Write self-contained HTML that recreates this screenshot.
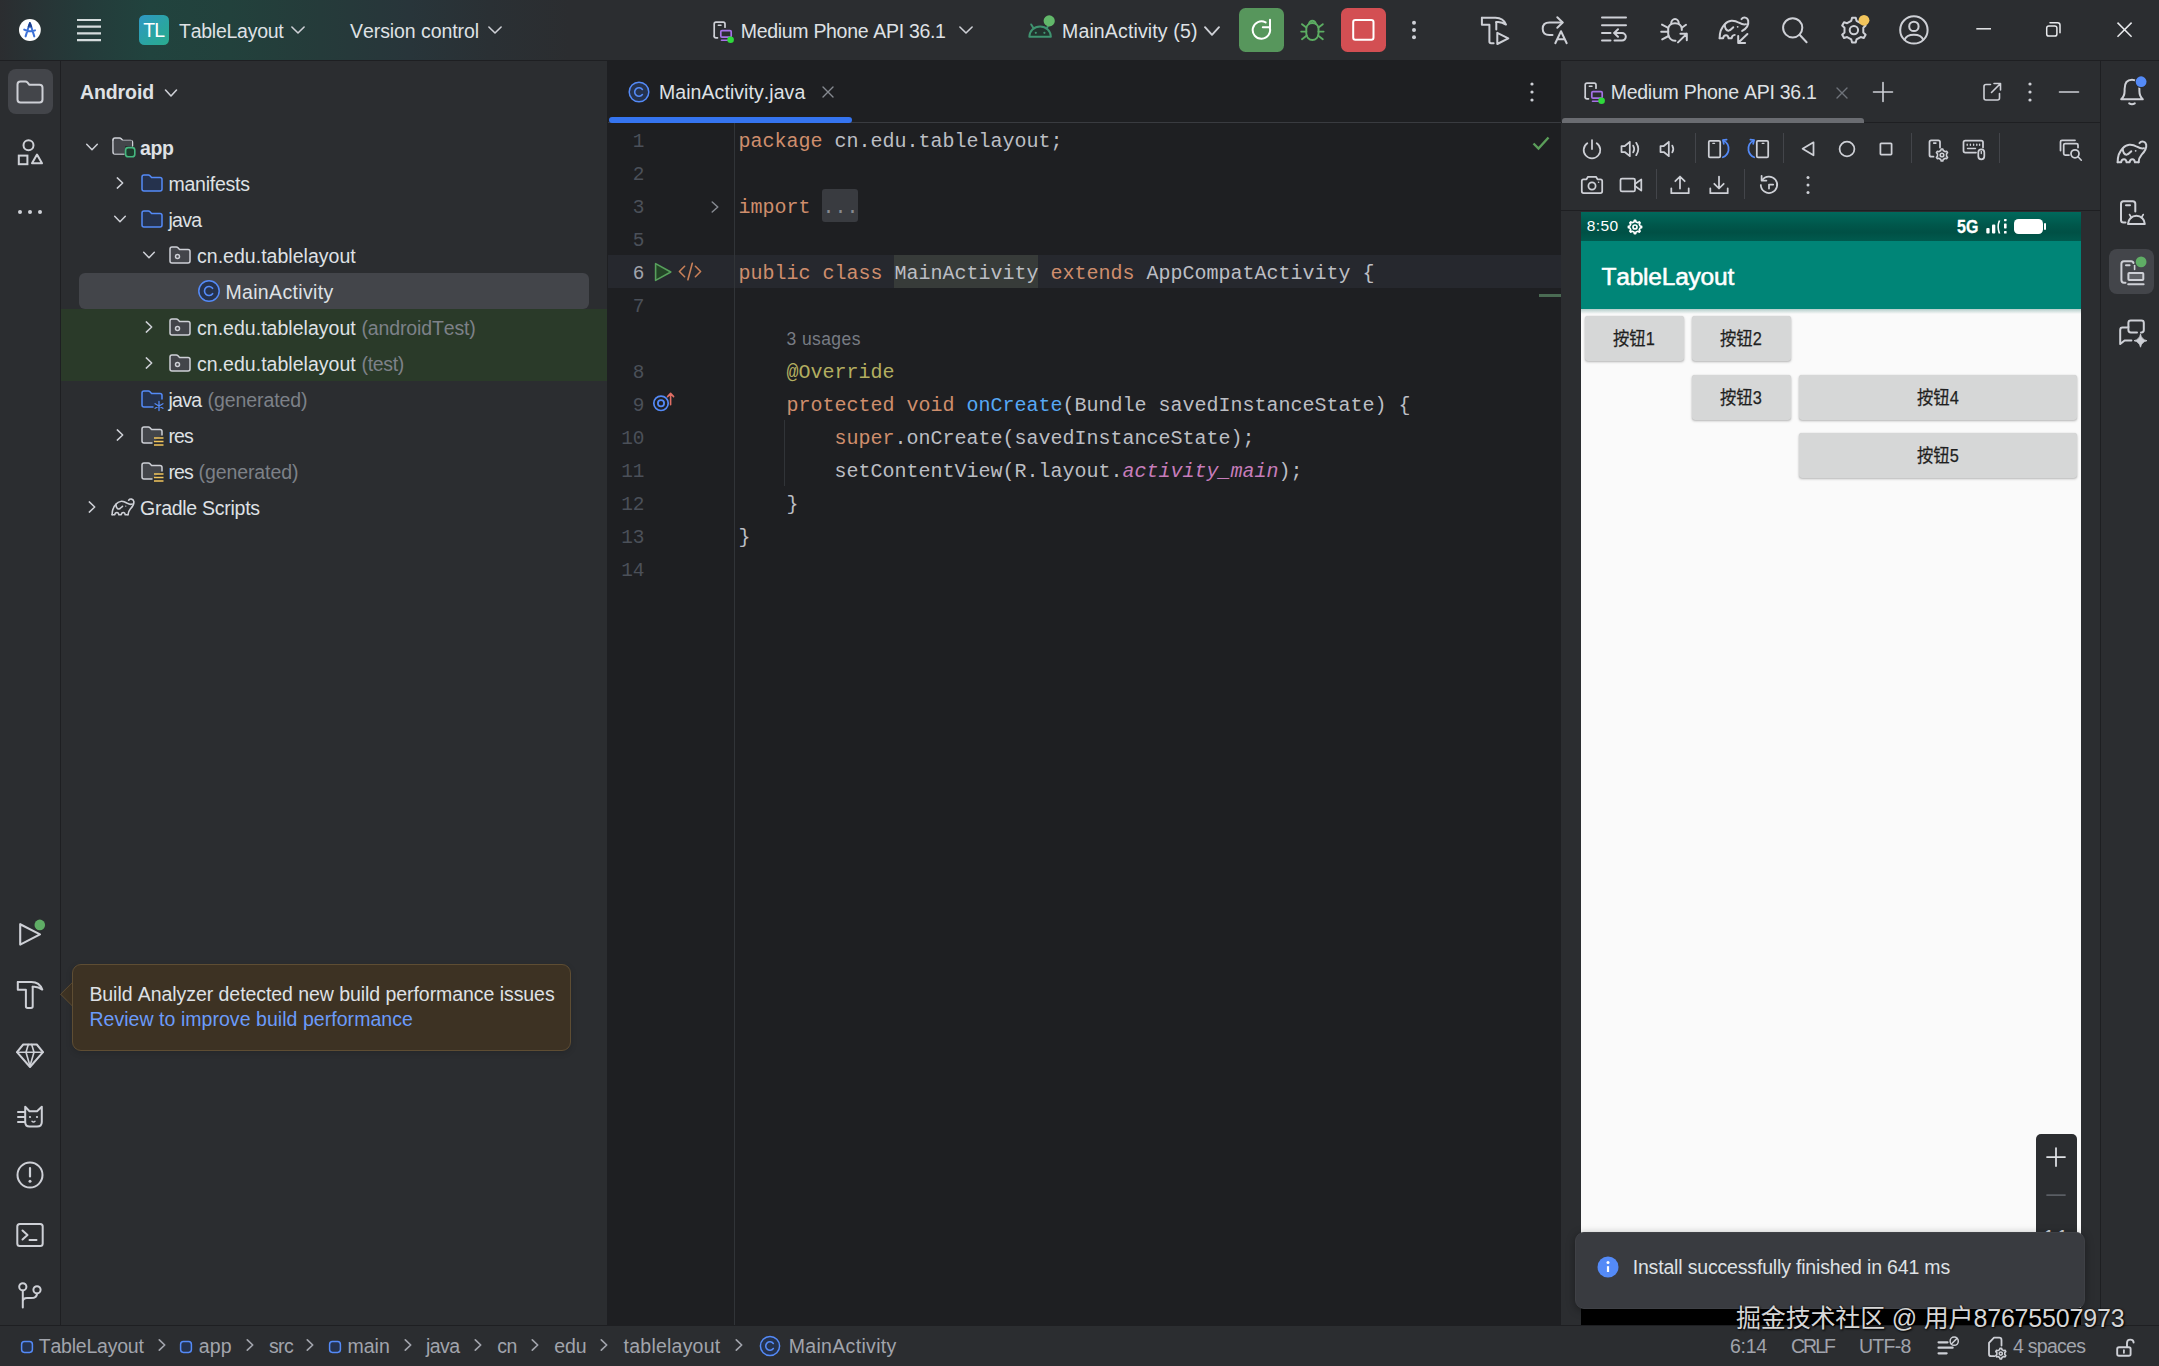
<!DOCTYPE html>
<html lang="en"><head><meta charset="utf-8"><title>TableLayout – MainActivity.java</title>
<style>
*{margin:0;padding:0;box-sizing:border-box}
html,body{width:2159px;height:1366px;overflow:hidden;background:#2b2d30}
body{position:relative;font-family:"Liberation Sans","Noto Sans CJK SC",sans-serif;font-kerning:none;-webkit-font-smoothing:antialiased}
.b{position:absolute}
.t{position:absolute;white-space:pre;display:block}
.s{font-family:"Liberation Sans","Noto Sans CJK SC",sans-serif}
.m{font-family:"Liberation Mono","Noto Sans CJK SC",monospace}
.i{position:absolute;overflow:visible;fill:none;stroke:#ced0d6;stroke-width:1.6;stroke-linecap:round;stroke-linejoin:round}
</style></head>
<body>
<div class="b" style="left:0px;top:0px;width:2159px;height:60px;background:linear-gradient(90deg,#2b2d30 0px,#283335 35px,#243b3a 85px,#21433e 150px,#22413c 230px,#253b3a 320px,#28353a 410px,#2a3034 490px,#2b2d30 570px);"></div>
<div class="b" style="left:0px;top:60px;width:2159px;height:1px;background:#1e1f22;"></div>
<div class="b" style="left:60px;top:61px;width:1px;height:1264px;background:#1e1f22;"></div>
<div class="b" style="left:607px;top:61px;width:1px;height:1264px;background:#1e1f22;"></div>
<div class="b" style="left:608px;top:61px;width:952.5px;height:1264px;background:#1e1f22;"></div>
<div class="b" style="left:1560.5px;top:61px;width:539.5px;height:1264px;background:#2b2d30;"></div>
<div class="b" style="left:2100px;top:61px;width:1px;height:1264px;background:#1e1f22;"></div>
<div class="b" style="left:0px;top:1325px;width:2159px;height:1px;background:#1e1f22;"></div>
<svg class="i" style="left:15px;top:15px;" width="30" height="30" viewBox="15 15 30 30"><circle cx="29.9" cy="30" r="10.9" fill="#fff" stroke="none"/>
<g stroke="#3d72d8" stroke-width="2" fill="none"><path d="M25.6 36.4L29.5 24M34.3 36.4L30.4 24M24.2 29.6Q29.9 32.6 35 30.4"/></g><path d="M28.3 26.6L29.9 22 31.5 26.6Z" fill="#1d3f8a" stroke="#1d3f8a" stroke-width="1"/></svg>
<svg class="i" style="left:73.5px;top:15.0px;" width="30" height="30" viewBox="0 0 30 30"><path d="M3 5H27M3 11.6H27M3 18.4H27M3 25.1H27" stroke-width="2.2" stroke="#d5dcdd" stroke-linecap="butt"/></svg>
<div class="b" style="left:139px;top:15px;width:30px;height:30px;background:linear-gradient(135deg,#2f97c6 0%,#2aa5a0 60%,#2aab8e 100%);border-radius:5.5px"></div>
<span class="t s" style="left:143.2px;top:18.1px;font-size:19.5px;line-height:25px;color:#fff;letter-spacing:-0.728px;">TL</span>
<span class="t s" style="left:179.0px;top:18.9px;font-size:19.5px;line-height:25px;color:#dfe1e5;letter-spacing:-0.257px;">TableLayout</span>
<svg class="i" style="left:286.0px;top:18.4px;" width="24" height="24" viewBox="0 0 24 24"><path d="M5.9 9L12 15L18.1 9" stroke="#ced0d6" stroke-width="1.6"/></svg>
<span class="t s" style="left:350.0px;top:18.9px;font-size:19.5px;line-height:25px;color:#dfe1e5;letter-spacing:-0.071px;">Version control</span>
<svg class="i" style="left:483.0px;top:18.4px;" width="24" height="24" viewBox="0 0 24 24"><path d="M5.9 9L12 15L18.1 9" stroke="#ced0d6" stroke-width="1.6"/></svg>
<svg class="i" style="left:709.0px;top:17.0px" width="28" height="28" viewBox="709 17 28 28"><g transform="translate(0 0)"><g transform="translate(0 0)"><path d="M714.2 36V24Q714.2 22.2 716 22.2H723.2Q725 22.2 725 24V27.2" stroke="#ced0d6" stroke-width="1.7"/><path d="M714.2 36Q714.2 37.8 716 37.8H717.5" stroke="#ced0d6" stroke-width="1.7"/><path d="M718.3 25.3H721" stroke="#ced0d6" stroke-width="1.5"/>
<rect x="720.8" y="30.6" width="10.4" height="6.6" rx="1.2" stroke="#a571e6" stroke-width="1.7" fill="#2b2d30"/><path d="M721.5 40.2H728" stroke="#a571e6" stroke-width="1.6"/>
<circle cx="730.6" cy="39.8" r="3.3" fill="#2fd93c" stroke="none"/></g></g></svg>
<span class="t s" style="left:740.8px;top:18.9px;font-size:19.5px;line-height:25px;color:#dfe1e5;letter-spacing:-0.313px;">Medium Phone API 36.1</span>
<svg class="i" style="left:954.0px;top:18.4px;" width="24" height="24" viewBox="0 0 24 24"><path d="M5.9 9L12 15L18.1 9" stroke="#ced0d6" stroke-width="1.6"/></svg>
<svg class="i" style="left:1024px;top:12px;" width="34" height="30" viewBox="1024 12 34 30"><path d="M1029.3 36.8a10.8 10.3 0 0 1 21.6 0z" stroke="#3f9470" stroke-width="1.9" fill="#22332e"/><path d="M1033.4 28L1031.2 24.4M1046.8 28l2.2-3.6" stroke="#3f9470" stroke-width="1.9"/>
<circle cx="1035.8" cy="32.8" r="1.1" fill="#3f9470" stroke="none"/><circle cx="1044.4" cy="32.8" r="1.1" fill="#3f9470" stroke="none"/>
<circle cx="1049.2" cy="20.9" r="5.6" fill="#62b86a" stroke="none"/></svg>
<span class="t s" style="left:1062.0px;top:18.9px;font-size:19.5px;line-height:25px;color:#dfe1e5;letter-spacing:0.145px;">MainActivity (5)</span>
<svg class="i" style="left:1199.7px;top:19.0px;" width="24" height="24" viewBox="0 0 24 24"><path d="M5 8.2L12 15.8L19 8.2" stroke="#ced0d6" stroke-width="1.9"/></svg>
<div class="b" style="left:1239px;top:7.6px;width:45px;height:44.6px;background:#57965c;border-radius:6.5px"></div>
<svg class="i" style="left:1246px;top:15px;" width="30" height="30" viewBox="1246 15 30 30"><path d="M1269.7 27.4A8.7 8.7 0 1 1 1265.6 22.4" stroke="#fff" stroke-width="2"/><path d="M1262.8 27.2H1270V19.8" stroke="#fff" stroke-width="2"/></svg>
<svg class="i" style="left:1297px;top:15px;" width="32" height="30" viewBox="1297 15 32 30"><g stroke="#5cad62" stroke-width="1.9"><path d="M1306.3 28.5a6.1 5.5 0 0 1 12.2 0V33.5a6.1 6.6 0 0 1-12.2 0z"/><path d="M1309 23.6A3.6 4.3 0 0 1 1315.8 23.6"/><path d="M1306.3 27.5L1302 24.2M1318.5 27.5l4.3-3.3M1306.3 31.6H1301.2M1318.5 31.6h5.1M1306.8 35.6L1302 39.2M1318 35.6l4.8 3.6"/></g></svg>
<div class="b" style="left:1341px;top:7.6px;width:45px;height:44.6px;background:#d34f53;border-radius:6.5px"></div>
<svg class="i" style="left:1348px;top:15px;" width="30" height="30" viewBox="1348 15 30 30"><rect x="1353.2" y="19.9" width="20.3" height="19.9" rx="2.2" stroke="#fff" stroke-width="2"/></svg>
<svg class="i" style="left:1402.4px;top:14.0px;" width="24" height="32" viewBox="0 0 24 32"><g fill="#ced0d6" stroke="none"><circle cx="12" cy="8.8" r="2"/><circle cx="12" cy="16" r="2"/><circle cx="12" cy="23.2" r="2"/></g></svg>
<svg class="i" style="left:1478px;top:13px;" width="34" height="34" viewBox="1478 13 34 34"><g stroke-width="2"><path d="M1481.9 17.7H1495.5Q1503.3 17.7 1506 24.6Q1501.5 21.3 1496.3 22"/><path d="M1481.9 17.7V24.8H1489.4V41.6Q1489.4 43.3 1491.1 43.3H1493.6"/><path d="M1496.3 22.3V29.5"/><path d="M1497.3 32.8V44L1508.3 38.4Z"/></g></svg>
<svg class="i" style="left:1538px;top:13px;" width="34" height="34" viewBox="1538 13 34 34"><g stroke-width="2"><path d="M1562.4 22.5H1549.5Q1542.7 22.5 1542.7 28.8T1549.5 35H1552.5"/><path d="M1557.3 17.3L1562.7 22.5 1557.3 27.7"/><path d="M1555.3 43.2L1561 31.2 1566.7 43.2M1557.3 39.2H1564.7"/></g></svg>
<svg class="i" style="left:1598px;top:13px;" width="34" height="34" viewBox="1598 13 34 34"><g stroke-width="2"><path d="M1602 17.6H1626M1602 25.3H1626M1602 33H1610.5M1602 40.6H1610.5M1614.5 40.6H1622A3.8 3.8 0 0 0 1622 33H1614.5"/><path d="M1618 29.3L1614.2 33 1618 36.7"/></g></svg>
<svg class="i" style="left:1658px;top:13px;" width="34" height="34" viewBox="1658 13 34 34"><g stroke-width="2"><path d="M1681.8 30V28.8A6.8 5.6 0 0 0 1668.2 28.8V33.8A6.9 7 0 0 0 1675.5 40.8"/><path d="M1671.2 23.6A3.8 4.6 0 0 1 1678.8 23.6"/><path d="M1668.2 27.8L1662 24.6M1681.8 27.8L1686 24.8M1668.2 31.8H1661.2M1668.6 36L1662.2 39.4"/><path d="M1678 42.4L1686.8 33.8M1680.4 33.8H1686.8V40.2"/></g></svg>
<svg class="i" style="left:1711.7px;top:7.6px" width="44" height="40" viewBox="1711.7 7.6 44 40"><g stroke="#ced0d6" stroke-width="2.0"><path d="M1719.35 37.85C1719.35 30.82 1721.99 26.14 1724.62 23.79C1727.84 19.69 1733.41 19.11 1738.68 22.33C1741.31 23.79 1743.66 24.67 1745.71 23.79"/><path d="M1724.33 24.09C1724.62 27.89 1726.09 30.53 1728.43 30.24C1730.48 29.65 1731.94 27.89 1732.97 26.87"/><path d="M1741.17 18.67C1743.07 16.18 1747.17 16.77 1747.90 20.28C1748.63 24.96 1745.71 28.48 1741.90 30.53"/><path d="M1719.35 37.85H1722.87Q1723.16 34.77 1725.79 34.77Q1727.84 34.77 1728.28 37.85H1731.36Q1731.65 34.77 1734.43 34.48"/><circle cx="1737.36" cy="26.43" r="0.90" fill="#ced0d6" stroke="none"/><path d="M1747.1 33.6L1738 42.4M1737.9 35.6V42.5H1744.8"/></g></svg>
<svg class="i" style="left:1779px;top:13px;" width="32" height="34" viewBox="1779 13 32 34"><g stroke-width="2"><circle cx="1792.7" cy="27.8" r="9.6"/><path d="M1799.6 34.8L1806.6 42.2"/></g></svg>
<svg class="i" style="left:1838px;top:14px" width="34" height="34" viewBox="1838 14 34 34"><path d="M1851.29 20.76L1852.06 17.64L1855.74 17.64L1856.51 20.76L1860.69 23.17L1863.77 22.27L1865.62 25.46L1863.30 27.69L1863.30 32.51L1865.62 34.74L1863.77 37.93L1860.69 37.03L1856.51 39.44L1855.74 42.56L1852.06 42.56L1851.29 39.44L1847.11 37.03L1844.03 37.93L1842.18 34.74L1844.50 32.51L1844.50 27.69L1842.18 25.46L1844.03 22.27L1847.11 23.17Z" stroke="#ced0d6" stroke-width="2" stroke-linejoin="round" fill="none"/><circle cx="1853.9" cy="30.1" r="4.20" stroke="#ced0d6" stroke-width="2" fill="none"/><circle cx="1864" cy="20.3" r="5.4" fill="#f2c55c" stroke="none"/></svg>
<svg class="i" style="left:1897px;top:13px;" width="34" height="34" viewBox="1897 13 34 34"><g stroke-width="2"><circle cx="1913.9" cy="29.9" r="13.7"/><circle cx="1913.9" cy="26.4" r="4.7"/><path d="M1904.6 39.8Q1906.4 34.8 1913.9 34.8T1923.2 39.8"/></g></svg>
<svg class="i" style="left:1970px;top:20px;" width="28" height="20" viewBox="1970 20 28 20"><path d="M1976.3 28.8H1991" stroke-width="1.5" stroke-linecap="butt" stroke="#e8e9ec"/></svg>
<svg class="i" style="left:2040px;top:16px;" width="28" height="28" viewBox="2040 16 28 28"><rect x="2046.7" y="25.9" width="10.2" height="10.2" rx="2.2" stroke="#e8e9ec" stroke-width="1.5"/><path d="M2050 22.8H2057.5Q2060 22.8 2060 25.3V32.8" stroke="#e8e9ec" stroke-width="1.5"/></svg>
<svg class="i" style="left:2110px;top:16px;" width="28" height="28" viewBox="2110 16 28 28"><path d="M2117.5 22.6L2131.6 36.7M2131.6 22.6L2117.5 36.7" stroke-width="1.5" stroke="#e8e9ec" stroke-linecap="butt"/></svg>
<span class="t s" style="left:80.0px;top:79.9px;font-size:19.5px;line-height:25px;color:#dfe1e5;letter-spacing:-0.105px;font-weight:700;">Android</span>
<svg class="i" style="left:159.0px;top:81.0px;" width="24" height="24" viewBox="0 0 24 24"><path d="M6.5 9L12 15L17.5 9" stroke="#ced0d6" stroke-width="1.6"/></svg>
<div class="b" style="left:61px;top:309px;width:546px;height:72px;background:#2a3a29;"></div>
<div class="b" style="left:79px;top:273px;width:510px;height:35.5px;background:#43454a;border-radius:6px"></div>
<svg class="i" style="left:79.6px;top:135.2px;" width="24" height="24" viewBox="0 0 24 24"><path d="M6.7 9.2L12 14.8L17.3 9.2" stroke="#ced0d6" stroke-width="1.5"/></svg>
<svg class="i" style="left:109.5px;top:132.7px;" width="28" height="28" viewBox="0 0 28 28"><path d="M3 7Q3 5 5 5H9.5Q10.5 5 11.2 5.8L12.8 7.6H20.5Q22.5 7.6 22.5 9.6V13" stroke="#ced0d6" fill="#43454a" stroke-width="1.5"/><path d="M3 7V19Q3 21 5 21H14" stroke="#ced0d6" stroke-width="1.5"/><path d="M3.8 7.6H22V13H15V20.5H4Z" fill="#43454a" stroke="none"/>
<rect x="15.6" y="14.6" width="9.2" height="9.2" rx="2.6" stroke="#45b87f" fill="#1d3a2c" stroke-width="1.6"/></svg>
<span class="t s" style="left:140.0px;top:135.9px;font-size:19.5px;line-height:25px;color:#dfe1e5;letter-spacing:-0.323px;font-weight:700;">app</span>
<svg class="i" style="left:107.5px;top:170.7px;" width="24" height="24" viewBox="0 0 24 24"><path d="M9.3 6.9L14.7 12L9.3 17.1" stroke="#ced0d6" stroke-width="1.5"/></svg>
<svg class="i" style="left:140.0px;top:170.7px;" width="24" height="24" viewBox="0 0 24 24"><path d="M2 6Q2 4 4 4H8.3Q9.3 4 10 4.8L11.6 6.6H20Q22 6.6 22 8.6V18Q22 20 20 20H4Q2 20 2 18Z" stroke="#548af7" fill="#25324d" stroke-width="1.5"/></svg>
<span class="t s" style="left:168.5px;top:171.9px;font-size:19.5px;line-height:25px;color:#dfe1e5;letter-spacing:-0.250px;">manifests</span>
<svg class="i" style="left:107.5px;top:207.2px;" width="24" height="24" viewBox="0 0 24 24"><path d="M6.7 9.2L12 14.8L17.3 9.2" stroke="#ced0d6" stroke-width="1.5"/></svg>
<svg class="i" style="left:140.0px;top:206.7px;" width="24" height="24" viewBox="0 0 24 24"><path d="M2 6Q2 4 4 4H8.3Q9.3 4 10 4.8L11.6 6.6H20Q22 6.6 22 8.6V18Q22 20 20 20H4Q2 20 2 18Z" stroke="#548af7" fill="#25324d" stroke-width="1.5"/></svg>
<span class="t s" style="left:168.5px;top:207.9px;font-size:19.5px;line-height:25px;color:#dfe1e5;letter-spacing:-0.718px;">java</span>
<svg class="i" style="left:137.0px;top:243.2px;" width="24" height="24" viewBox="0 0 24 24"><path d="M6.7 9.2L12 14.8L17.3 9.2" stroke="#ced0d6" stroke-width="1.5"/></svg>
<svg class="i" style="left:168.0px;top:242.7px;" width="24" height="24" viewBox="0 0 24 24"><path d="M2 6Q2 4 4 4H8.3Q9.3 4 10 4.8L11.6 6.6H20Q22 6.6 22 8.6V18Q22 20 20 20H4Q2 20 2 18Z" stroke="#ced0d6" fill="#43454a" stroke-width="1.5"/><circle cx="9.5" cy="13.5" r="2" stroke="#ced0d6" fill="none" stroke-width="1.5"/></svg>
<span class="t s" style="left:197.0px;top:243.9px;font-size:19.5px;line-height:25px;color:#dfe1e5;letter-spacing:0.029px;">cn.edu.tablelayout</span>
<svg class="i" style="left:196.7px;top:278.7px;" width="24" height="24" viewBox="0 0 24 24"><circle cx="12" cy="12" r="10.2" stroke="#548af7" fill="#25324d" stroke-width="1.5"/><path d="M15.6 9.3A4.5 4.5 0 1 0 15.6 14.7" stroke="#548af7" stroke-width="1.6" fill="none"/></svg>
<span class="t s" style="left:225.4px;top:279.9px;font-size:19.5px;line-height:25px;color:#dfe1e5;letter-spacing:0.348px;">MainActivity</span>
<svg class="i" style="left:136.8px;top:314.7px;" width="24" height="24" viewBox="0 0 24 24"><path d="M9.3 6.9L14.7 12L9.3 17.1" stroke="#ced0d6" stroke-width="1.5"/></svg>
<svg class="i" style="left:168.0px;top:314.7px;" width="24" height="24" viewBox="0 0 24 24"><path d="M2 6Q2 4 4 4H8.3Q9.3 4 10 4.8L11.6 6.6H20Q22 6.6 22 8.6V18Q22 20 20 20H4Q2 20 2 18Z" stroke="#ced0d6" fill="#43454a" stroke-width="1.5"/><circle cx="9.5" cy="13.5" r="2" stroke="#ced0d6" fill="none" stroke-width="1.5"/></svg>
<span class="t s" style="left:197.0px;top:315.9px;font-size:19.5px;line-height:25px;color:#dfe1e5;letter-spacing:0.029px;">cn.edu.tablelayout</span>
<span class="t s" style="left:361.5px;top:315.9px;font-size:19.5px;line-height:25px;color:#7d8188;letter-spacing:-0.136px;">(androidTest)</span>
<svg class="i" style="left:136.8px;top:350.7px;" width="24" height="24" viewBox="0 0 24 24"><path d="M9.3 6.9L14.7 12L9.3 17.1" stroke="#ced0d6" stroke-width="1.5"/></svg>
<svg class="i" style="left:168.0px;top:350.7px;" width="24" height="24" viewBox="0 0 24 24"><path d="M2 6Q2 4 4 4H8.3Q9.3 4 10 4.8L11.6 6.6H20Q22 6.6 22 8.6V18Q22 20 20 20H4Q2 20 2 18Z" stroke="#ced0d6" fill="#43454a" stroke-width="1.5"/><circle cx="9.5" cy="13.5" r="2" stroke="#ced0d6" fill="none" stroke-width="1.5"/></svg>
<span class="t s" style="left:197.0px;top:351.9px;font-size:19.5px;line-height:25px;color:#dfe1e5;letter-spacing:0.029px;">cn.edu.tablelayout</span>
<span class="t s" style="left:361.5px;top:351.9px;font-size:19.5px;line-height:25px;color:#7d8188;letter-spacing:-0.320px;">(test)</span>
<svg class="i" style="left:140.0px;top:386.7px;" width="24" height="24" viewBox="0 0 24 24"><path d="M22 12V8.6Q22 6.6 20 6.6H11.6L10 4.8Q9.3 4 8.3 4H4Q2 4 2 6V18Q2 20 4 20H13" stroke="#548af7" fill="#25324d" stroke-width="1.5"/><path d="M19 14.5V23.5M15.1 16.7L22.9 21.3M15.1 21.3L22.9 16.7" stroke="#548af7" stroke-width="1.3"/></svg>
<span class="t s" style="left:168.5px;top:387.9px;font-size:19.5px;line-height:25px;color:#dfe1e5;letter-spacing:-0.718px;">java</span>
<span class="t s" style="left:207.5px;top:387.9px;font-size:19.5px;line-height:25px;color:#7d8188;letter-spacing:-0.074px;">(generated)</span>
<svg class="i" style="left:107.5px;top:422.7px;" width="24" height="24" viewBox="0 0 24 24"><path d="M9.3 6.9L14.7 12L9.3 17.1" stroke="#ced0d6" stroke-width="1.5"/></svg>
<svg class="i" style="left:140.0px;top:422.7px;" width="24" height="24" viewBox="0 0 24 24"><path d="M22 12V8.6Q22 6.6 20 6.6H11.6L10 4.8Q9.3 4 8.3 4H4Q2 4 2 6V18Q2 20 4 20H12" stroke="#ced0d6" fill="#43454a" stroke-width="1.5"/><path d="M14 15H23.5M14 18.5H23.5M14 22H23.5" stroke="#f2c55c" stroke-width="1.7" stroke-linecap="butt"/></svg>
<span class="t s" style="left:168.5px;top:423.9px;font-size:19.5px;line-height:25px;color:#dfe1e5;letter-spacing:-0.930px;">res</span>
<svg class="i" style="left:140.0px;top:458.7px;" width="24" height="24" viewBox="0 0 24 24"><path d="M22 12V8.6Q22 6.6 20 6.6H11.6L10 4.8Q9.3 4 8.3 4H4Q2 4 2 6V18Q2 20 4 20H12" stroke="#ced0d6" fill="#43454a" stroke-width="1.5"/><path d="M14 15H23.5M14 18.5H23.5M14 22H23.5" stroke="#f2c55c" stroke-width="1.7" stroke-linecap="butt"/></svg>
<span class="t s" style="left:168.5px;top:459.9px;font-size:19.5px;line-height:25px;color:#dfe1e5;letter-spacing:-0.930px;">res</span>
<span class="t s" style="left:198.5px;top:459.9px;font-size:19.5px;line-height:25px;color:#7d8188;letter-spacing:-0.092px;">(generated)</span>
<svg class="i" style="left:79.6px;top:494.7px;" width="24" height="24" viewBox="0 0 24 24"><path d="M9.3 6.9L14.7 12L9.3 17.1" stroke="#ced0d6" stroke-width="1.5"/></svg>
<svg class="i" style="left:101.0px;top:487.3px" width="44" height="40" viewBox="101.0 487.3 44 40"><g stroke="#ced0d6" stroke-width="1.6"><path d="M112.10 515.09C112.10 509.75 114.10 506.19 116.10 504.41C118.55 501.29 122.78 500.85 126.78 503.29C128.79 504.41 130.57 505.07 132.12 504.41"/><path d="M115.88 504.63C116.10 507.52 117.21 509.53 118.99 509.30C120.55 508.86 121.66 507.52 122.44 506.74"/><path d="M128.67 500.51C130.12 498.62 133.24 499.07 133.79 501.74C134.35 505.30 132.12 507.52 130.34 509.30C128.79 511.08 128.12 512.86 128.01 515.09"/><path d="M112.10 515.09H114.77Q114.99 512.75 116.99 512.75Q118.55 512.75 118.88 515.09H121.22Q121.44 512.75 123.33 512.75Q124.89 512.75 125.23 515.09H128.01"/><circle cx="125.78" cy="506.41" r="0.68" fill="#ced0d6" stroke="none"/></g></svg>
<span class="t s" style="left:140.0px;top:495.9px;font-size:19.5px;line-height:25px;color:#dfe1e5;letter-spacing:-0.267px;">Gradle Scripts</span>
<div class="b" style="left:608px;top:122px;width:952.5px;height:1px;background:#393b40;"></div>
<div class="b" style="left:609px;top:117px;width:243px;height:5.5px;background:#3574f0;border-radius:3px"></div>
<svg class="i" style="left:626.5px;top:80.0px;" width="24" height="24" viewBox="0 0 24 24"><circle cx="12" cy="12" r="9.8" stroke="#548af7" fill="#25324d" stroke-width="1.5"/><path d="M15.4 9.4A4.3 4.3 0 1 0 15.4 14.6" stroke="#548af7" stroke-width="1.6" fill="none"/></svg>
<span class="t s" style="left:659.0px;top:79.5px;font-size:19.5px;line-height:25px;color:#dfe1e5;letter-spacing:0.064px;">MainActivity.java</span>
<svg class="i" style="left:820.0px;top:84.0px;" width="16" height="16" viewBox="0 0 16 16"><path d="M3 3L13 13M13 3L3 13" stroke="#868a91" stroke-width="1.4"/></svg>
<svg class="i" style="left:1520.0px;top:76.0px;" width="24" height="32" viewBox="0 0 24 32"><g fill="#ced0d6" stroke="none"><circle cx="12" cy="8" r="1.6"/><circle cx="12" cy="16" r="1.6"/><circle cx="12" cy="24" r="1.6"/></g></svg>
<div class="b" style="left:608px;top:254.5px;width:952.5px;height:33.0px;background:#26282e;"></div>
<div class="b" style="left:734px;top:123px;width:1px;height:1202px;background:#313438;"></div>
<div class="b" style="left:894px;top:254.5px;width:144px;height:33.0px;background:#373b39;"></div>
<div class="b" style="left:822px;top:189px;width:36px;height:33px;background:#393b40;border-radius:3px"></div>
<div class="b" style="left:784px;top:420px;width:1px;height:66px;background:#313438;"></div>
<span class="t m" style="left:632.8px;top:130.0px;font-size:19.4px;line-height:25px;color:#4b5059;letter-spacing:-0.122px;">1</span>
<span class="t m" style="left:632.8px;top:163.0px;font-size:19.4px;line-height:25px;color:#4b5059;letter-spacing:-0.122px;">2</span>
<span class="t m" style="left:632.8px;top:196.0px;font-size:19.4px;line-height:25px;color:#4b5059;letter-spacing:-0.122px;">3</span>
<span class="t m" style="left:632.8px;top:229.0px;font-size:19.4px;line-height:25px;color:#4b5059;letter-spacing:-0.122px;">5</span>
<span class="t m" style="left:632.8px;top:262.0px;font-size:19.4px;line-height:25px;color:#a1a3ab;letter-spacing:-0.122px;">6</span>
<span class="t m" style="left:632.8px;top:295.0px;font-size:19.4px;line-height:25px;color:#4b5059;letter-spacing:-0.122px;">7</span>
<span class="t m" style="left:632.8px;top:361.0px;font-size:19.4px;line-height:25px;color:#4b5059;letter-spacing:-0.122px;">8</span>
<span class="t m" style="left:632.8px;top:394.0px;font-size:19.4px;line-height:25px;color:#4b5059;letter-spacing:-0.122px;">9</span>
<span class="t m" style="left:621.3px;top:427.0px;font-size:19.4px;line-height:25px;color:#4b5059;letter-spacing:-0.122px;">10</span>
<span class="t m" style="left:621.3px;top:460.0px;font-size:19.4px;line-height:25px;color:#4b5059;letter-spacing:-0.122px;">11</span>
<span class="t m" style="left:621.3px;top:493.0px;font-size:19.4px;line-height:25px;color:#4b5059;letter-spacing:-0.122px;">12</span>
<span class="t m" style="left:621.3px;top:526.0px;font-size:19.4px;line-height:25px;color:#4b5059;letter-spacing:-0.122px;">13</span>
<span class="t m" style="left:621.3px;top:559.0px;font-size:19.4px;line-height:25px;color:#4b5059;letter-spacing:-0.122px;">14</span>
<span class="t m" style="left:738.4px;top:128.7px;font-size:20px;line-height:26px;color:#cf8e6d;">package</span>
<span class="t m" style="left:834.4px;top:128.7px;font-size:20px;line-height:26px;color:#bcbec4;">cn.edu.tablelayout;</span>
<span class="t m" style="left:738.4px;top:194.7px;font-size:20px;line-height:26px;color:#cf8e6d;">import</span>
<span class="t m" style="left:822.4px;top:194.7px;font-size:20px;line-height:26px;color:#868a91;">...</span>
<span class="t m" style="left:738.4px;top:260.7px;font-size:20px;line-height:26px;color:#cf8e6d;">public</span>
<span class="t m" style="left:822.4px;top:260.7px;font-size:20px;line-height:26px;color:#cf8e6d;">class</span>
<span class="t m" style="left:894.4px;top:260.7px;font-size:20px;line-height:26px;color:#bcbec4;">MainActivity</span>
<span class="t m" style="left:1050.4px;top:260.7px;font-size:20px;line-height:26px;color:#cf8e6d;">extends</span>
<span class="t m" style="left:1146.4px;top:260.7px;font-size:20px;line-height:26px;color:#bcbec4;">AppCompatActivity {</span>
<span class="t s" style="left:786.5px;top:328.0px;font-size:17.5px;line-height:23px;color:#787c84;letter-spacing:0.409px;">3 usages</span>
<span class="t m" style="left:786.4px;top:359.7px;font-size:20px;line-height:26px;color:#b3ae60;">@Override</span>
<span class="t m" style="left:786.4px;top:392.7px;font-size:20px;line-height:26px;color:#cf8e6d;">protected</span>
<span class="t m" style="left:906.4px;top:392.7px;font-size:20px;line-height:26px;color:#cf8e6d;">void</span>
<span class="t m" style="left:966.4px;top:392.7px;font-size:20px;line-height:26px;color:#56a8f5;">onCreate</span>
<span class="t m" style="left:1062.4px;top:392.7px;font-size:20px;line-height:26px;color:#bcbec4;">(Bundle savedInstanceState) {</span>
<span class="t m" style="left:834.4px;top:425.7px;font-size:20px;line-height:26px;color:#cf8e6d;">super</span>
<span class="t m" style="left:894.4px;top:425.7px;font-size:20px;line-height:26px;color:#bcbec4;">.onCreate(savedInstanceState);</span>
<span class="t m" style="left:834.4px;top:458.7px;font-size:20px;line-height:26px;color:#bcbec4;">setContentView(R.layout.</span>
<span class="t m" style="left:1122.4px;top:458.7px;font-size:20px;line-height:26px;color:#c77dbb;font-style:italic;">activity_main</span>
<span class="t m" style="left:1278.4px;top:458.7px;font-size:20px;line-height:26px;color:#bcbec4;">);</span>
<span class="t m" style="left:786.4px;top:491.7px;font-size:20px;line-height:26px;color:#bcbec4;">}</span>
<span class="t m" style="left:738.4px;top:524.7px;font-size:20px;line-height:26px;color:#bcbec4;">}</span>
<svg class="i" style="left:651.0px;top:259.5px;" width="24" height="24" viewBox="0 0 24 24"><path d="M4.6 3.6V20.4L19.8 12Z" stroke="#57a05c" fill="#234426" stroke-width="1.6"/></svg>
<svg class="i" style="left:676px;top:260px;" width="28" height="24" viewBox="676 260 28 24"><path d="M684.6 266.3L679.4 271.5 684.6 276.7M695.4 266.3L700.6 271.5 695.4 276.7M692.3 263.2L687.9 279.8" stroke="#c98058" stroke-width="1.6"/></svg>
<svg class="i" style="left:650px;top:390px;" width="28" height="26" viewBox="650 390 28 26"><circle cx="661" cy="403.3" r="7.2" stroke="#548af7" stroke-width="1.7"/><circle cx="661" cy="403.3" r="3.1" stroke="#548af7" stroke-width="1.8"/><path d="M670.6 404.8V393.6M667.6 396.6L670.6 393.4 673.6 396.6" stroke="#e06e64" stroke-width="1.6"/></svg>
<svg class="i" style="left:702.5px;top:194.5px;" width="24" height="24" viewBox="0 0 24 24"><path d="M9.2 7L14.8 12L9.2 17" stroke="#868a91" stroke-width="1.5"/></svg>
<svg class="i" style="left:1528.5px;top:131.0px;" width="24" height="24" viewBox="0 0 24 24"><path d="M4.5 12.5L9.5 17.5 19.5 6.5" stroke="#5b9e5a" stroke-width="2.4" stroke-linecap="butt" stroke-linejoin="miter"/></svg>
<div class="b" style="left:1539px;top:294px;width:21.5px;height:2.5px;background:#4a6b53;"></div>
<svg class="i" style="left:1580.0px;top:78.2px" width="28" height="28" viewBox="709 17 28 28"><g transform="translate(-871 -61.2)"><g transform="translate(871 61.2)"><path d="M714.2 36V24Q714.2 22.2 716 22.2H723.2Q725 22.2 725 24V27.2" stroke="#ced0d6" stroke-width="1.7"/><path d="M714.2 36Q714.2 37.8 716 37.8H717.5" stroke="#ced0d6" stroke-width="1.7"/><path d="M718.3 25.3H721" stroke="#ced0d6" stroke-width="1.5"/>
<rect x="720.8" y="30.6" width="10.4" height="6.6" rx="1.2" stroke="#a571e6" stroke-width="1.7" fill="#2b2d30"/><path d="M721.5 40.2H728" stroke="#a571e6" stroke-width="1.6"/>
<circle cx="730.6" cy="39.8" r="3.3" fill="#2fd93c" stroke="none"/></g></g></svg>
<span class="t s" style="left:1610.7px;top:79.5px;font-size:19.5px;line-height:25px;color:#dfe1e5;letter-spacing:-0.256px;">Medium Phone API 36.1</span>
<svg class="i" style="left:1834.0px;top:84.5px;" width="16" height="16" viewBox="0 0 16 16"><path d="M3 3L13 13M13 3L3 13" stroke="#6f737a" stroke-width="1.4"/></svg>
<svg class="i" style="left:1871.0px;top:80.0px;" width="24" height="24" viewBox="0 0 24 24"><path d="M12 2.5V21.5M2.5 12H21.5" stroke-width="1.6"/></svg>
<svg class="i" style="left:1979.5px;top:80.0px;" width="24" height="24" viewBox="0 0 24 24"><path d="M10.5 4.5H6Q4 4.5 4 6.5V18Q4 20 6 20H17.5Q19.5 20 19.5 18V13.5" stroke-width="1.6"/><path d="M14 3.5H20.5V10M20.5 3.5L11.5 12.5" stroke-width="1.6"/></svg>
<svg class="i" style="left:2018.0px;top:76.0px;" width="24" height="32" viewBox="0 0 24 32"><g fill="#ced0d6" stroke="none"><circle cx="12" cy="8" r="1.6"/><circle cx="12" cy="16" r="1.6"/><circle cx="12" cy="24" r="1.6"/></g></svg>
<svg class="i" style="left:2057.0px;top:80.0px;" width="24" height="24" viewBox="0 0 24 24"><path d="M2.5 12H21.5" stroke-width="1.6"/></svg>
<div class="b" style="left:1561px;top:121.5px;width:539px;height:1.0px;background:#1e1f22;"></div>
<div class="b" style="left:1562px;top:118px;width:302px;height:4.5px;background:#6a6c71;border-radius:3px 3px 0 0"></div>
<svg class="i" style="left:1580.0px;top:137.2px;" width="24" height="24" viewBox="0 0 24 24"><path d="M7.3 6.2A8.3 8.3 0 1 0 16.7 6.2M12 3V12" stroke-width="1.75"/></svg>
<svg class="i" style="left:1618.5px;top:137.2px;" width="24" height="24" viewBox="0 0 24 24"><path d="M2.5 9H5.8L10.8 4.8V19.2L5.8 15H2.5Z" stroke-width="1.75"/><path d="M14.2 8.6Q16.2 12 14.2 15.4M17.2 5.8Q21.4 12 17.2 18.2" stroke-width="1.75"/></svg>
<svg class="i" style="left:1655.5px;top:137.2px;" width="24" height="24" viewBox="0 0 24 24"><path d="M4.5 9H7.8L12.8 4.8V19.2L7.8 15H4.5Z" stroke-width="1.75"/><path d="M16.3 8.6Q18.3 12 16.3 15.4" stroke-width="1.75"/></svg>
<div class="b" style="left:1694.5px;top:133px;width:1.0px;height:30px;background:#43454a;"></div>
<svg class="i" style="left:1706.0px;top:137.2px;" width="26" height="24" viewBox="0 0 26 24"><rect x="2.8" y="3.8" width="11.4" height="16.6" rx="1.2" stroke-width="1.75"/><path d="M6.8 6.3H8.6" stroke-width="1.3"/><path d="M17.3 3.5Q23.5 6.5 22.5 13.5 21.5 18.5 16.8 20.3" stroke="#548af7" stroke-width="1.75"/><path d="M17.8 6.8L17 3.2 20.6 2.6" stroke="#548af7" stroke-width="1.75"/></svg>
<svg class="i" style="left:1745.0px;top:137.2px;" width="26" height="24" viewBox="0 0 26 24"><rect x="11.8" y="3.8" width="11.4" height="16.6" rx="1.2" stroke-width="1.75"/><path d="M17.2 6.3H19" stroke-width="1.3"/><path d="M8.7 3.5Q2.5 6.5 3.5 13.5 4.5 18.5 9.2 20.3" stroke="#548af7" stroke-width="1.75"/><path d="M8.2 6.8L9 3.2 5.4 2.6" stroke="#548af7" stroke-width="1.75"/></svg>
<div class="b" style="left:1782.5px;top:133px;width:1.0px;height:30px;background:#43454a;"></div>
<svg class="i" style="left:1796.0px;top:137.2px;" width="24" height="24" viewBox="0 0 24 24"><path d="M17.5 5.3V18.3L6.6 11.8Z" stroke-width="1.75"/></svg>
<svg class="i" style="left:1834.8px;top:137.2px;" width="24" height="24" viewBox="0 0 24 24"><circle cx="12" cy="12" r="7.4" stroke-width="1.75"/></svg>
<svg class="i" style="left:1873.7px;top:137.2px;" width="24" height="24" viewBox="0 0 24 24"><rect x="6.4" y="6.3" width="11.2" height="11.2" rx="0.8" stroke-width="1.75"/></svg>
<div class="b" style="left:1910.5px;top:133px;width:1.0px;height:30px;background:#43454a;"></div>
<svg class="i" style="left:1925.0px;top:136.7px;" width="26" height="26" viewBox="0 0 26 26"><path d="M4.5 18V5Q4.5 3.3 6.2 3.3H13.3Q15 3.3 15 5V10.5M4.5 18Q4.5 19.7 6.2 19.7H8.5M8.8 6H10.8" stroke-width="1.75"/></svg><svg class="i" style="left:1926.0px;top:139.3px" width="32" height="32" viewBox="1926 139.3 32 32"><path d="M1940.79 150.78L1941.19 149.36L1942.81 149.36L1943.21 150.78L1945.31 151.99L1946.74 151.62L1947.56 153.03L1946.52 154.09L1946.52 156.51L1947.56 157.57L1946.74 158.98L1945.31 158.61L1943.21 159.82L1942.81 161.24L1941.19 161.24L1940.79 159.82L1938.69 158.61L1937.26 158.98L1936.44 157.57L1937.48 156.51L1937.48 154.09L1936.44 153.03L1937.26 151.62L1938.69 151.99Z" stroke="#ced0d6" stroke-width="1.6" stroke-linejoin="round" fill="none"/><circle cx="1942" cy="155.3" r="1.80" stroke="#ced0d6" stroke-width="1.6" fill="none"/></svg>
<svg class="i" style="left:1961.0px;top:136.7px;" width="26" height="26" viewBox="0 0 26 26"><path d="M15 15.5H4.3Q2.5 15.5 2.5 13.7V5.3Q2.5 3.5 4.3 3.5H20.2Q22 3.5 22 5.3V10.5" stroke-width="1.75"/><path d="M6.2 7.3V8.3M9.4 7.3V8.3M12.6 7.3V8.3M15.8 7.3V8.3M18.6 7.3V8.3M6.5 11.5H14.5" stroke-width="1.4"/><rect x="17.3" y="12.3" width="6" height="10" rx="3" stroke-width="1.75"/><path d="M20.3 14.5V16.5" stroke-width="1.3"/></svg>
<div class="b" style="left:1998.5px;top:133px;width:1.0px;height:30px;background:#43454a;"></div>
<svg class="i" style="left:2057.0px;top:137.2px;" width="26" height="26" viewBox="0 0 26 26"><path d="M3.5 13.5V4.8Q3.5 3.3 5 3.3H18" stroke-width="1.75"/><path d="M12 18H8.2Q6.7 18 6.7 16.5V8Q6.7 6.5 8.2 6.5H19.5Q21 6.5 21 8V10.5" stroke-width="1.75"/><circle cx="18" cy="16.8" r="4" stroke-width="1.75"/><path d="M21 19.8L24.3 23.2" stroke-width="1.6"/></svg>
<svg class="i" style="left:1580.0px;top:173.2px;" width="24" height="24" viewBox="0 0 24 24"><path d="M1.8 8Q1.8 6.3 3.5 6.3H6.5L8 3.8H16L17.5 6.3H20.5Q22.2 6.3 22.2 8V18.3Q22.2 20 20.5 20H3.5Q1.8 20 1.8 18.3Z" stroke-width="1.75"/><circle cx="12" cy="13" r="3.6" stroke-width="1.75"/><circle cx="18.6" cy="9.3" r="0.8" fill="#ced0d6" stroke="none"/></svg>
<svg class="i" style="left:1619.0px;top:173.2px;" width="24" height="24" viewBox="0 0 24 24"><rect x="1.5" y="5.6" width="14.5" height="12.8" rx="1.5" stroke-width="1.75"/><path d="M16 11L22.3 6.4V17.6L16 13" stroke-width="1.75"/></svg>
<div class="b" style="left:1655.5px;top:169px;width:1.0px;height:30px;background:#43454a;"></div>
<svg class="i" style="left:1668.0px;top:173.2px;" width="24" height="24" viewBox="0 0 24 24"><path d="M12 15.5V4M7.3 8.2L12 3.5 16.7 8.2M3.3 15.3V20.2H20.7V15.3" stroke-width="1.75"/></svg>
<svg class="i" style="left:1707.0px;top:173.2px;" width="24" height="24" viewBox="0 0 24 24"><path d="M12 3.5V15M7.3 10.8L12 15.5 16.7 10.8M3.3 15.3V20.2H20.7V15.3" stroke-width="1.75"/></svg>
<div class="b" style="left:1743.5px;top:169px;width:1.0px;height:30px;background:#43454a;"></div>
<svg class="i" style="left:1757.0px;top:173.2px;" width="24" height="24" viewBox="0 0 24 24"><path d="M5.2 7.2A8.2 8.2 0 1 1 3.8 12" stroke-width="1.75"/><path d="M4.6 2.8V7.6H9.4M12 15.5V11.5H16.2" stroke-width="1.75"/></svg>
<svg class="i" style="left:1796.2px;top:169.2px;" width="24" height="32" viewBox="0 0 24 32"><g fill="#ced0d6" stroke="none"><circle cx="12" cy="8.5" r="1.5"/><circle cx="12" cy="16" r="1.5"/><circle cx="12" cy="23.5" r="1.5"/></g></svg>
<div class="b" style="left:1561px;top:210px;width:539px;height:1px;background:#1e1f22;"></div>
<div class="b" style="left:1581px;top:212px;width:500.1999999999998px;height:1113px;background:#000;"></div>
<div class="b" style="left:1581px;top:212px;width:500.1999999999998px;height:29px;background:linear-gradient(#00695c 0%,#00574b 45%,#005045 70%,#005a4e 100%);"></div>
<div class="b" style="left:1581px;top:241px;width:500.1999999999998px;height:68px;background:#008577;"></div>
<div class="b" style="left:1581px;top:309px;width:500.1999999999998px;height:1000px;background:#fafafa;"></div>
<div class="b" style="left:1581px;top:309px;width:500.1999999999998px;height:5px;background:linear-gradient(rgba(0,90,80,.28),rgba(0,0,0,0));"></div>
<span class="t s" style="left:1586.7px;top:216.2px;font-size:15.5px;line-height:20px;color:#fff;letter-spacing:0.433px;">8:50</span>
<svg class="i" style="left:1619.0px;top:210.5px" width="32" height="32" viewBox="1619 210.5 32 32"><path d="M1634.00 221.45L1634.33 219.93L1635.67 219.93L1636.00 221.45L1637.86 222.22L1639.17 221.38L1640.12 222.33L1639.28 223.64L1640.05 225.50L1641.57 225.83L1641.57 227.17L1640.05 227.50L1639.28 229.36L1640.12 230.67L1639.17 231.62L1637.86 230.78L1636.00 231.55L1635.67 233.07L1634.33 233.07L1634.00 231.55L1632.14 230.78L1630.83 231.62L1629.88 230.67L1630.72 229.36L1629.95 227.50L1628.43 227.17L1628.43 225.83L1629.95 225.50L1630.72 223.64L1629.88 222.33L1630.83 221.38L1632.14 222.22Z" stroke="#fff" stroke-width="1.7" stroke-linejoin="round" fill="none"/><circle cx="1635" cy="226.5" r="2.00" stroke="#fff" stroke-width="1.7" fill="none"/></svg>
<span class="t s" style="left:1957.0px;top:214.3px;font-size:19px;line-height:25px;color:#fff;font-weight:700;-webkit-text-stroke:0.3px #fff;transform:scaleX(0.8404);transform-origin:0 50%;">5G</span>
<svg class="i" style="left:1984.5px;top:217.0px;" width="24" height="18" viewBox="0 0 24 18"><g fill="#fff" stroke="none"><rect x="1.3" y="11" width="3.3" height="5.6" rx="1"/><rect x="7" y="7.5" width="3.3" height="9.1" rx="1"/><path d="M15.3 3.6Q12.6 9.5 15.3 16.6H13.6Q11.2 9.5 13.6 3.6Z"/><rect x="19" y="2" width="2.6" height="2.2" rx=".6"/><rect x="19" y="6.4" width="2.6" height="5" rx=".6"/><rect x="19" y="14" width="2.6" height="2.6" rx=".6"/></g></svg>
<div class="b" style="left:2014.3px;top:218.7px;width:28.700000000000045px;height:15.0px;background:#fff;border-radius:4.5px"></div>
<div class="b" style="left:2044px;top:222.5px;width:2.2000000000000455px;height:7.5px;background:#fff;border-radius:1px"></div>
<span class="t s" style="left:1601.5px;top:260.8px;font-size:24.5px;line-height:32px;color:#fff;letter-spacing:-0.213px;-webkit-text-stroke:0.55px #fff;">TableLayout</span>
<div class="b" style="left:1585px;top:316px;width:98.5px;height:45px;background:#d6d7d7;border-radius:3px;box-shadow:0 1px 2.5px rgba(0,0,0,.28),0 0 1px rgba(0,0,0,.15)"></div>
<span class="t s" style="left:1613.3px;top:326.7px;font-size:18.2px;line-height:24px;color:#1f1f1f;-webkit-text-stroke:0.25px #1f1f1f;transform:scaleX(0.8985);transform-origin:0 50%;">按钮1</span>
<div class="b" style="left:1692px;top:316px;width:98.59999999999991px;height:45px;background:#d6d7d7;border-radius:3px;box-shadow:0 1px 2.5px rgba(0,0,0,.28),0 0 1px rgba(0,0,0,.15)"></div>
<span class="t s" style="left:1720.4px;top:326.7px;font-size:18.2px;line-height:24px;color:#1f1f1f;-webkit-text-stroke:0.25px #1f1f1f;transform:scaleX(0.8985);transform-origin:0 50%;">按钮2</span>
<div class="b" style="left:1692px;top:374.6px;width:98.59999999999991px;height:45.39999999999998px;background:#d6d7d7;border-radius:3px;box-shadow:0 1px 2.5px rgba(0,0,0,.28),0 0 1px rgba(0,0,0,.15)"></div>
<span class="t s" style="left:1720.4px;top:385.5px;font-size:18.2px;line-height:24px;color:#1f1f1f;-webkit-text-stroke:0.25px #1f1f1f;transform:scaleX(0.8985);transform-origin:0 50%;">按钮3</span>
<div class="b" style="left:1798.7px;top:374.6px;width:278.29999999999995px;height:45.39999999999998px;background:#d6d7d7;border-radius:3px;box-shadow:0 1px 2.5px rgba(0,0,0,.28),0 0 1px rgba(0,0,0,.15)"></div>
<span class="t s" style="left:1916.9px;top:385.5px;font-size:18.2px;line-height:24px;color:#1f1f1f;-webkit-text-stroke:0.25px #1f1f1f;transform:scaleX(0.8985);transform-origin:0 50%;">按钮4</span>
<div class="b" style="left:1798.7px;top:433px;width:278.29999999999995px;height:45.30000000000001px;background:#d6d7d7;border-radius:3px;box-shadow:0 1px 2.5px rgba(0,0,0,.28),0 0 1px rgba(0,0,0,.15)"></div>
<span class="t s" style="left:1916.9px;top:443.8px;font-size:18.2px;line-height:24px;color:#1f1f1f;-webkit-text-stroke:0.25px #1f1f1f;transform:scaleX(0.8985);transform-origin:0 50%;">按钮5</span>
<div class="b" style="left:2036px;top:1134px;width:41px;height:126px;background:#2b2d30;border-radius:5px"></div>
<svg class="i" style="left:2044.0px;top:1145.0px;" width="24" height="24" viewBox="0 0 24 24"><path d="M12 3V21M3 12H21" stroke="#dfe1e5" stroke-width="1.75"/></svg>
<svg class="i" style="left:2044.0px;top:1183.0px;" width="24" height="24" viewBox="0 0 24 24"><path d="M3 12H21" stroke="#5a5d63" stroke-width="1.75"/></svg>
<span class="t s" style="left:2045.0px;top:1226.1px;font-size:14px;line-height:18px;color:#ced0d6;letter-spacing:0.588px;font-weight:700;">1:1</span>
<div class="b" style="left:7.5px;top:69px;width:45.0px;height:45px;background:#43454a;border-radius:8px"></div>
<svg class="i" style="left:15.0px;top:77.0px;" width="30" height="30" viewBox="0 0 30 30"><path d="M2.5 7.5Q2.5 4.5 5.5 4.5H10.4Q11.6 4.5 12.4 5.4L14.4 7.8H24.5Q27.5 7.8 27.5 10.8V22.5Q27.5 25.5 24.5 25.5H5.5Q2.5 25.5 2.5 22.5Z" stroke-width="2"/></svg>
<svg class="i" style="left:15.0px;top:137.0px;" width="30" height="30" viewBox="0 0 30 30"><circle cx="13.5" cy="8.3" r="5" stroke-width="2"/><rect x="3.8" y="18.6" width="8.6" height="8.6" stroke-width="2" stroke-linejoin="miter"/><path d="M22 17.5L27 26.3H17Z" stroke-width="2"/></svg>
<svg class="i" style="left:15.0px;top:197.0px;" width="30" height="30" viewBox="0 0 30 30"><g fill="#ced0d6" stroke="none"><circle cx="5" cy="15" r="2"/><circle cx="15" cy="15" r="2"/><circle cx="25" cy="15" r="2"/></g></svg>
<svg class="i" style="left:15.0px;top:919.0px;" width="30" height="30" viewBox="0 0 30 30"><path d="M5.2 5.2V25.6L25 15.4Z" stroke-width="2.1"/><circle cx="24.8" cy="5.9" r="5.3" fill="#5fad65" stroke="none"/></svg>
<svg class="i" style="left:14px;top:978px;" width="34" height="34" viewBox="14 978 34 34"><g stroke-width="2"><path d="M17.8 982H31.5Q39.5 982 42.3 989.6Q37.5 986 32.7 986.8"/><path d="M17.8 982V989.8H25.9V1006.3Q25.9 1008 27.6 1008H31Q32.7 1008 32.7 1006.3V986.8"/></g></svg>
<svg class="i" style="left:15.0px;top:1039.5px;" width="30" height="30" viewBox="0 0 30 30"><path d="M8.2 4.5H21.8L28 12.2 15 27 2 12.2Z" stroke-width="2"/><path d="M2 12.2H28M11 12.2L15 26M19 12.2L15 26M11 12.2L13.3 4.5M19 12.2L16.7 4.5" stroke-width="1.6"/></svg>
<svg class="i" style="left:15.0px;top:1100.5px;" width="30" height="30" viewBox="0 0 30 30"><path d="M10.2 5.8L14.5 10.2H22L26.8 5.8V21Q26.8 25.5 22 25.5H14.5Q10.2 25.5 10.2 21Z" stroke-width="2"/><path d="M3 11H10M3 16H10M3 21H10" stroke-width="2"/><circle cx="15" cy="16" r="1.1" fill="#ced0d6" stroke="none"/><circle cx="22" cy="16" r="1.1" fill="#ced0d6" stroke="none"/><path d="M17 20.2Q18.5 21.8 20 20.2" stroke-width="1.4"/></svg>
<svg class="i" style="left:15.0px;top:1159.5px;" width="30" height="30" viewBox="0 0 30 30"><circle cx="15" cy="15" r="12.5" stroke-width="2"/><path d="M15 8V16.5" stroke-width="2.2"/><circle cx="15" cy="21.3" r="1.5" fill="#ced0d6" stroke="none"/></svg>
<svg class="i" style="left:15.0px;top:1220.0px;" width="30" height="30" viewBox="0 0 30 30"><rect x="2.3" y="4" width="25.4" height="22" rx="2.5" stroke-width="2"/><path d="M7.5 10.5L12.5 15 7.5 19.5M14.5 20H21.5" stroke-width="2"/></svg>
<svg class="i" style="left:15.0px;top:1279.5px;" width="30" height="30" viewBox="0 0 30 30"><circle cx="7.8" cy="6.8" r="3.6" stroke-width="2"/><circle cx="22" cy="9.8" r="3.6" stroke-width="2"/><path d="M7.8 10.4V27.5M7.8 21.5Q7.8 18 12 18H16Q22 18 22 13.4" stroke-width="2"/></svg>
<svg class="i" style="left:2115px;top:74px;" width="34" height="34" viewBox="2115 74 34 34"><g stroke-width="2"><path d="M2121.2 99.3Q2124.6 96.3 2124.6 91V89Q2124.6 79.8 2132 79.8T2139.4 89V91Q2139.4 96.3 2142.8 99.3Z"/><path d="M2129.2 103.3Q2132 105 2134.8 103.3"/></g><circle cx="2141.1" cy="81.7" r="6.4" fill="#2b2d30" stroke="none"/><circle cx="2141.1" cy="81.7" r="5.4" fill="#548af7" stroke="none"/></svg>
<svg class="i" style="left:2110.1px;top:132.2px" width="44" height="40" viewBox="2110.1 132.2 44 40"><g stroke="#ced0d6" stroke-width="2.0"><path d="M2117.75 162.45C2117.75 155.42 2120.39 150.74 2123.02 148.39C2126.24 144.29 2131.81 143.71 2137.08 146.93C2139.71 148.39 2142.06 149.27 2144.11 148.39"/><path d="M2122.73 148.69C2123.02 152.49 2124.49 155.13 2126.83 154.84C2128.88 154.25 2130.34 152.49 2131.37 151.47"/><path d="M2139.57 143.27C2141.47 140.78 2145.57 141.37 2146.30 144.88C2147.03 149.56 2144.11 152.49 2141.76 154.84C2139.71 157.18 2138.83 159.52 2138.69 162.45"/><path d="M2117.75 162.45H2121.27Q2121.56 159.37 2124.19 159.37Q2126.24 159.37 2126.68 162.45H2129.76Q2130.05 159.37 2132.54 159.37Q2134.59 159.37 2135.03 162.45H2138.69"/><circle cx="2135.76" cy="151.03" r="0.90" fill="#ced0d6" stroke="none"/></g></svg>
<svg class="i" style="left:2116px;top:197px;" width="34" height="32" viewBox="2116 197 34 32"><g stroke-width="2"><path d="M2121 220V203.8Q2121 201.3 2123.5 201.3H2132.8Q2135.3 201.3 2135.3 203.8V211.5"/><path d="M2121 220Q2121 222.6 2123.5 222.6H2125.5M2126 205.2H2130"/><path d="M2128 224a8.4 8.2 0 0 1 16.8 0z"/><path d="M2131.4 217.6L2129.6 214.6M2141.4 217.6l1.8-3" stroke-width="1.8"/></g></svg>
<div class="b" style="left:2109px;top:248.8px;width:44.80000000000018px;height:45.19999999999999px;background:#43454a;border-radius:8px"></div>
<svg class="i" style="left:2116px;top:254px;" width="34" height="34" viewBox="2116 254 34 34"><g stroke-width="2"><path d="M2121.4 280V263.7Q2121.4 261.2 2123.9 261.2H2131Q2133.2 261.2 2133.5 263M2121.4 280Q2121.4 282.7 2123.9 282.7H2125.5M2126 265.3H2129.6"/><rect x="2128.4" y="273" width="14.9" height="7" rx="0.8" fill="#5f6166"/><path d="M2128.2 284.3H2143.6"/><path d="M2134.6 265.5V269.5" stroke-width="1.6"/></g><circle cx="2141.1" cy="261.9" r="5.4" fill="#5fad65" stroke="none"/></svg>
<svg class="i" style="left:2116px;top:316px;" width="34" height="34" viewBox="2116 316 34 34"><g stroke-width="2"><path d="M2128.4 327V322.8Q2128.4 320.4 2130.8 320.4H2141.4Q2143.8 320.4 2143.8 322.8V330Q2143.8 332.4 2141.4 332.4H2141"/><path d="M2131.4 340.4H2124.6L2120.2 344V330Q2120.2 327.6 2122.6 327.6H2127"/><path d="M2128.4 327V330Q2128.4 332.4 2130.8 332.4H2137"/></g><path d="M2140.5 334.2Q2141.6 339.6 2147 340.7 2141.6 341.8 2140.5 347.2 2139.4 341.8 2134 340.7 2139.4 339.6 2140.5 334.2Z" fill="#ced0d6" stroke="#ced0d6" stroke-width="0.8"/></svg>
<span class="t s" style="left:38.7px;top:1334.3px;font-size:19.5px;line-height:25px;color:#a1a4ac;letter-spacing:-0.212px;">TableLayout</span>
<span class="t s" style="left:198.7px;top:1334.3px;font-size:19.5px;line-height:25px;color:#a1a4ac;letter-spacing:0.188px;">app</span>
<span class="t s" style="left:269.0px;top:1334.3px;font-size:19.5px;line-height:25px;color:#a1a4ac;letter-spacing:-0.665px;">src</span>
<span class="t s" style="left:347.5px;top:1334.3px;font-size:19.5px;line-height:25px;color:#a1a4ac;letter-spacing:0.008px;">main</span>
<span class="t s" style="left:426.0px;top:1334.3px;font-size:19.5px;line-height:25px;color:#a1a4ac;letter-spacing:-0.543px;">java</span>
<span class="t s" style="left:497.3px;top:1334.3px;font-size:19.5px;line-height:25px;color:#a1a4ac;letter-spacing:-0.648px;">cn</span>
<span class="t s" style="left:554.3px;top:1334.3px;font-size:19.5px;line-height:25px;color:#a1a4ac;letter-spacing:-0.145px;">edu</span>
<span class="t s" style="left:623.6px;top:1334.3px;font-size:19.5px;line-height:25px;color:#a1a4ac;letter-spacing:0.225px;">tablelayout</span>
<span class="t s" style="left:788.7px;top:1334.3px;font-size:19.5px;line-height:25px;color:#a1a4ac;letter-spacing:0.331px;">MainActivity</span>
<svg class="i" style="left:149.5px;top:1333.4px;" width="24" height="24" viewBox="0 0 24 24"><path d="M9.3 6.9L14.7 12L9.3 17.1" stroke="#a1a4ac" stroke-width="1.7"/></svg>
<svg class="i" style="left:238.0px;top:1333.4px;" width="24" height="24" viewBox="0 0 24 24"><path d="M9.3 6.9L14.7 12L9.3 17.1" stroke="#a1a4ac" stroke-width="1.7"/></svg>
<svg class="i" style="left:298.0px;top:1333.4px;" width="24" height="24" viewBox="0 0 24 24"><path d="M9.3 6.9L14.7 12L9.3 17.1" stroke="#a1a4ac" stroke-width="1.7"/></svg>
<svg class="i" style="left:395.6px;top:1333.4px;" width="24" height="24" viewBox="0 0 24 24"><path d="M9.3 6.9L14.7 12L9.3 17.1" stroke="#a1a4ac" stroke-width="1.7"/></svg>
<svg class="i" style="left:466.0px;top:1333.4px;" width="24" height="24" viewBox="0 0 24 24"><path d="M9.3 6.9L14.7 12L9.3 17.1" stroke="#a1a4ac" stroke-width="1.7"/></svg>
<svg class="i" style="left:523.0px;top:1333.4px;" width="24" height="24" viewBox="0 0 24 24"><path d="M9.3 6.9L14.7 12L9.3 17.1" stroke="#a1a4ac" stroke-width="1.7"/></svg>
<svg class="i" style="left:592.3px;top:1333.4px;" width="24" height="24" viewBox="0 0 24 24"><path d="M9.3 6.9L14.7 12L9.3 17.1" stroke="#a1a4ac" stroke-width="1.7"/></svg>
<svg class="i" style="left:726.8px;top:1333.4px;" width="24" height="24" viewBox="0 0 24 24"><path d="M9.3 6.9L14.7 12L9.3 17.1" stroke="#a1a4ac" stroke-width="1.7"/></svg>
<svg class="i" style="left:18.5px;top:1338.5px;" width="16" height="16" viewBox="0 0 16 16"><rect x="2.6" y="2.6" width="10.8" height="10.8" rx="2.8" stroke="#548af7" fill="#25324d" stroke-width="1.5"/></svg>
<svg class="i" style="left:178.0px;top:1338.5px;" width="16" height="16" viewBox="0 0 16 16"><rect x="2.6" y="2.6" width="10.8" height="10.8" rx="2.8" stroke="#548af7" fill="#25324d" stroke-width="1.5"/></svg>
<svg class="i" style="left:326.7px;top:1338.5px;" width="16" height="16" viewBox="0 0 16 16"><rect x="2.6" y="2.6" width="10.8" height="10.8" rx="2.8" stroke="#548af7" fill="#25324d" stroke-width="1.5"/></svg>
<svg class="i" style="left:757.5px;top:1334.3px;" width="24" height="24" viewBox="0 0 24 24"><circle cx="12" cy="12" r="9.6" stroke="#548af7" fill="#25324d" stroke-width="1.5"/><path d="M15.3 9.5A4.2 4.2 0 1 0 15.3 14.5" stroke="#548af7" stroke-width="1.6" fill="none"/></svg>
<span class="t s" style="left:1730.0px;top:1334.3px;font-size:19.5px;line-height:25px;color:#a1a4ac;letter-spacing:-0.313px;">6:14</span>
<span class="t s" style="left:1791.0px;top:1334.3px;font-size:19.5px;line-height:25px;color:#a1a4ac;letter-spacing:-1.980px;">CRLF</span>
<span class="t s" style="left:1859.0px;top:1334.3px;font-size:19.5px;line-height:25px;color:#a1a4ac;letter-spacing:-0.749px;">UTF-8</span>
<svg class="i" style="left:1934px;top:1332px;" width="30" height="30" viewBox="1934 1332 30 30"><path d="M1938.6 1342.3H1947.5M1938.6 1347.7H1952.6M1938.6 1353.3H1946.6" stroke="#ced0d6" stroke-width="2.3"/><circle cx="1954.2" cy="1341.2" r="4.1" stroke="#ced0d6" stroke-width="1.5"/><path d="M1951.4 1344L1957 1338.4" stroke="#ced0d6" stroke-width="1.5"/></svg>
<svg class="i" style="left:1984px;top:1332px;" width="30" height="30" viewBox="1984 1332 30 30"><path d="M1994.3 1356.2H1991.3Q1989 1356.2 1989 1353.9V1342.8L1994 1337.7H1999.2Q2001.5 1337.7 2001.5 1340V1345.6" stroke="#ced0d6" stroke-width="1.8"/><path d="M1999.70 1349.65L2000.01 1348.26L2001.59 1348.26L2001.90 1349.65L2003.67 1350.67L2005.03 1350.25L2005.82 1351.61L2004.78 1352.58L2004.78 1354.62L2005.82 1355.59L2005.03 1356.95L2003.67 1356.53L2001.90 1357.55L2001.59 1358.94L2000.01 1358.94L1999.70 1357.55L1997.93 1356.53L1996.57 1356.95L1995.78 1355.59L1996.82 1354.62L1996.82 1352.58L1995.78 1351.61L1996.57 1350.25L1997.93 1350.67Z" stroke="#ced0d6" stroke-width="1.6" stroke-linejoin="round" fill="none"/><circle cx="2000.8" cy="1353.6" r="1.60" stroke="#ced0d6" stroke-width="1.6" fill="none"/></svg>
<span class="t s" style="left:2013.0px;top:1334.3px;font-size:19.5px;line-height:25px;color:#a1a4ac;letter-spacing:-0.731px;">4 spaces</span>
<svg class="i" style="left:2110px;top:1332px;" width="30" height="30" viewBox="2110 1332 30 30"><rect x="2117.2" y="1347.3" width="13.4" height="8.4" rx="1.8" stroke="#ced0d6" stroke-width="1.9"/><path d="M2127 1347V1343Q2127 1339.6 2130.3 1339.6T2133.6 1342.6" stroke="#ced0d6" stroke-width="1.9"/><path d="M2123.9 1350.2V1352.8" stroke="#ced0d6" stroke-width="1.8"/></svg>
<svg class="i" style="left:58px;top:980px;" width="16" height="28" viewBox="58 980 16 28"><path d="M72.6 982.3L60.6 994.2 72.6 1006.2" fill="#3d3223" stroke="#5e4d33" stroke-width="1"/></svg>
<div class="b" style="left:72px;top:964px;width:499px;height:86.5px;background:#3d3223;border:1px solid #5e4d33;border-radius:9px;box-shadow:0 2px 6px rgba(0,0,0,.15)"></div>
<div class="b" style="left:72.6px;top:983.3px;width:1.9000000000000057px;height:21.90000000000009px;background:#3d3223;"></div>
<span class="t s" style="left:89.4px;top:981.7px;font-size:19.5px;line-height:25px;color:#dfe1e5;letter-spacing:-0.059px;">Build Analyzer detected new build performance issues</span>
<span class="t s" style="left:89.4px;top:1006.7px;font-size:19.5px;line-height:25px;color:#6b9bfa;letter-spacing:0.046px;">Review to improve build performance</span>
<div class="b" style="left:1581px;top:1308px;width:500.1999999999998px;height:15.5px;background:#000;"></div>
<div class="b" style="left:1575px;top:1232px;width:510px;height:76.5px;background:#393b40;border-radius:9px;box-shadow:0 2px 8px rgba(0,0,0,.35);border:1px solid #3f4146"></div>
<svg class="i" style="left:1596.0px;top:1254.5px;" width="24" height="24" viewBox="0 0 24 24"><circle cx="12" cy="12" r="10.5" fill="#548af7" stroke="none"/><circle cx="12" cy="7.6" r="1.5" fill="#fff" stroke="none"/><path d="M12 11.2V17" stroke="#fff" stroke-width="2.2" stroke-linecap="butt"/></svg>
<span class="t s" style="left:1632.7px;top:1254.9px;font-size:19.5px;line-height:25px;color:#dfe1e5;letter-spacing:-0.173px;">Install successfully finished in 641 ms</span>
<span class="t s" style="left:1736.0px;top:1302.3px;font-size:25px;line-height:32px;color:#d6d6d6;letter-spacing:-0.169px;text-shadow:1px 1px 2px rgba(0,0,0,.9),0 0 2px rgba(0,0,0,.7);">掘金技术社区 @ 用户87675507973</span>
</body></html>
